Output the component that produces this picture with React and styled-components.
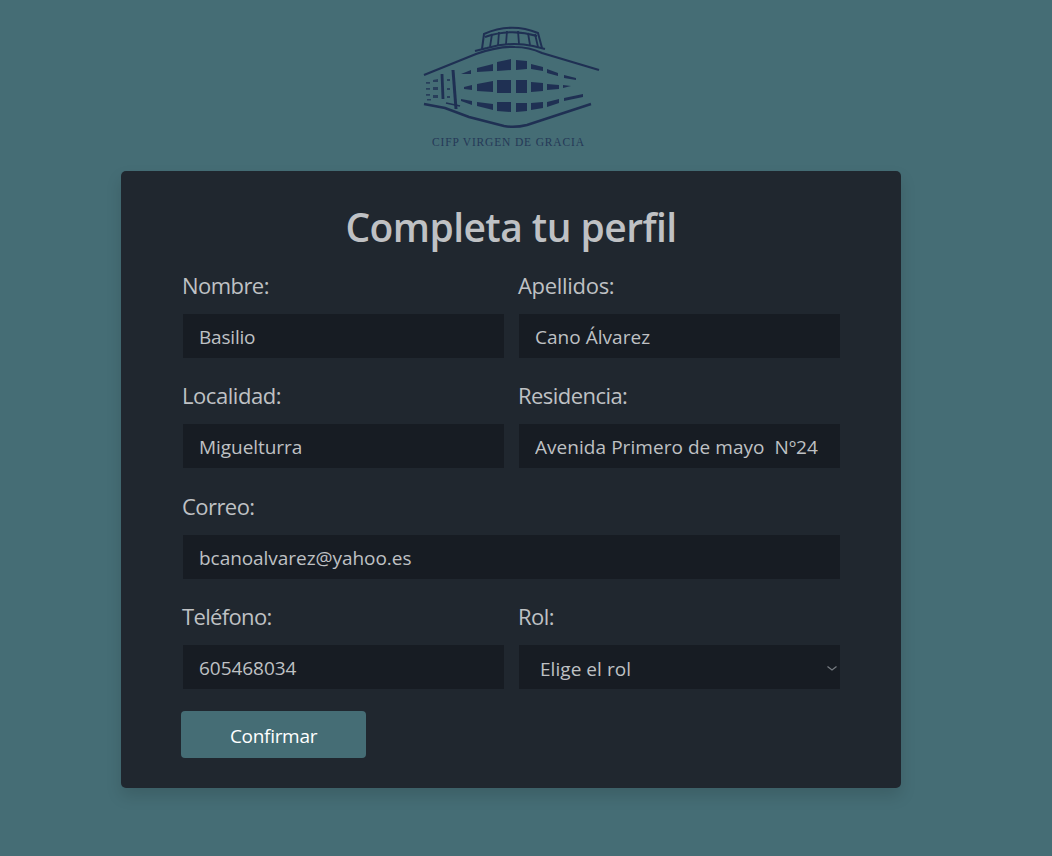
import React from "react";
import styled, { createGlobalStyle } from "styled-components";

const GlobalStyle = createGlobalStyle`
  *, *::before, *::after { box-sizing: border-box; }
  body {
    margin: 0;
    background: #456d75;
    color: #bfc1c4;
    font-family: "Open Sans", "Noto Sans", sans-serif;
  }
`;

const Page = styled.main`
  display: flex;
  flex-direction: column;
  align-items: center;
  width: 1022px;
  min-height: 856px;
  padding-top: 24px;
`;

const Logo = styled.svg`
  display: block;
  width: 184px;
  height: 128px;
  margin-bottom: 19px;
  flex: none;
`;

const Card = styled.form`
  width: 780px;
  height: 617px;
  padding: 29px 60px 30px;
  border-radius: 5px;
  background: #20272f;
  box-shadow: 0 8px 16px rgba(0, 0, 0, 0.13);
`;

const Title = styled.h1`
  margin: 0 0 10px;
  text-align: center;
  font-size: 39px;
  line-height: 54px;
  font-weight: 600;
  letter-spacing: -0.56px;
`;

const Fields = styled.div`
  display: grid;
  grid-template-columns: 1fr 1fr;
  column-gap: 12px;
  grid-auto-rows: 110.4px;
`;

const Field = styled.label`
  display: flex;
  flex-direction: column;
  padding: 0 1px 0 2px;
  grid-column: ${(p) => (p.$wide ? "1 / -1" : "auto")};
`;

const Caption = styled.span`
  margin-left: -1px;
  font-size: 22px;
  line-height: 42px;
  height: 50px;
  white-space: nowrap;
  letter-spacing: ${(p) => p.$tracking ?? -0.55}px;
`;

const Input = styled.input`
  width: 100%;
  height: 44px;
  padding: 2px 16px 0;
  border: 0;
  outline: 0;
  background: #171c23;
  color: inherit;
  font: 400 19px "Open Sans", "Noto Sans", sans-serif;
  letter-spacing: ${(p) => p.$tracking ?? -0.05}px;
`;

const SelectBox = styled.span`
  display: grid;
  align-items: center;

  > * { grid-area: 1 / 1; }
`;

const Select = styled(Input).attrs({ as: "select" })`
  appearance: none;
  padding-top: 3px;
  padding-left: 21px;
`;

const Chevron = styled.svg`
  justify-self: end;
  width: 12px;
  height: 8px;
  margin: 3px 2px 0 0;
  pointer-events: none;
`;

const Button = styled.button`
  display: block;
  width: 185px;
  height: 47px;
  margin-top: 5px;
  padding: 3px 0 0;
  border: 0;
  border-radius: 4px;
  background: #456d75;
  color: #fff;
  font: 400 19px "Open Sans", "Noto Sans", sans-serif;
  letter-spacing: -0.3px;
`;

const ink = "#1f3053";

function SchoolLogo() {
  return (
    <Logo viewBox="420 24 184 128" role="img" aria-label="CIFP Virgen de Gracia">
      <g fill="none" stroke={ink} strokeWidth="2.2">
        <path d="M425 75 L477 54 Q500 46 516 47 Q530 47 543 53 L600 70" />
        <path d="M425 104 L446 108 L470 117 L505 126 Q516 128 528 125 L592 104" strokeWidth="2.5" />
        <path d="M476 51 L488 48 Q512 41 534 46 L546 49" strokeWidth="2" />
        <path d="M483 49 L485 34 Q512 22 539 33 L543 48 M486 37 Q512 28 538 36" strokeWidth="2" />
        <path d="M493 34 L491 47 M500 32 L499 45 M508 31 L507 44 M519 31 L520 44 M529 33 L531 45 M536 34 L539 47" strokeWidth="1.8" />
        <path d="M443 74 L444 99" strokeWidth="2.8" />
        <path d="M454 70 L457 109" strokeWidth="3" />
        <path d="M447 103 L461 106" strokeWidth="1.7" />
      </g>
      <g fill={ink}>
        <path d="M462 74 L472 70 V74 Z M478 68 L494 64 V71 L478 72 Z M498 62 L512 59 V70 L498 71 Z M517 60 L528 61 V69 L517 70 Z M532 64 L544 67 V71 L532 69 Z M548 69 L559 73 V76 L548 73 Z M565 75 L577 78 V80 L565 78 Z" />
        <path d="M465 87 L473 85 V90 L465 89 Z M478 84 L494 81 V92 L478 91 Z M498 80 H512 V93 H498 Z M517 80 H528 V93 H517 Z M532 82 L544 83 V91 L532 92 Z M548 84 L560 85 V89 L548 90 Z M564 85 L572 86 L564 88 Z" />
        <path d="M462 99 L473 101 V105 L462 101 Z M478 102 L494 104 V110 L478 106 Z M498 102 H512 V112 L498 111 Z M517 103 H528 V111 L517 112 Z M532 103 L544 102 V108 L532 110 Z M548 102 L560 99 V103 L548 107 Z M565 98 L584 94 V97 L565 101 Z" />
        <path d="M427 82 h4 v1.8 h-4z M434 80 l5 -1 v3 h-5z M427 88 h4 v1.8 h-4z M434 87 h5 v3 h-5z M427 94 h4 v1.8 h-4z M434 95 h5 v3 h-5z M428 99 h4 v1.5 h-4z M448 79 h3 v2 h-3z M448 88 h3 v2 h-3z M448 96 h3 v2 h-3z" opacity="0.75" />
        <text x="433" y="145.5" fontFamily="Liberation Serif, serif" fontSize="11.5" textLength="152" lengthAdjust="spacing" opacity="0.85">
          CIFP VIRGEN DE GRACIA
        </text>
      </g>
    </Logo>
  );
}

const fields = [
  { label: "Nombre:", value: "Basilio", valueTracking: -0.2 },
  { label: "Apellidos:", value: "Cano Álvarez", labelTracking: -0.3, valueTracking: 0.03 },
  { label: "Localidad:", value: "Miguelturra", labelTracking: -0.45 },
  { label: "Residencia:", value: "Avenida Primero de mayo  Nº24", valueTracking: 0.05 },
  { label: "Correo:", value: "bcanoalvarez@yahoo.es", type: "email", wide: true },
  { label: "Teléfono:", value: "605468034", type: "tel", labelTracking: -0.65 },
];

export default function App() {
  return (
    <>
      <GlobalStyle />
      <Page>
        <SchoolLogo />
        <Card onSubmit={(e) => e.preventDefault()}>
          <Title>Completa tu perfil</Title>
          <Fields>
            {fields.map((f) => (
              <Field key={f.label} $wide={f.wide}>
                <Caption $tracking={f.labelTracking}>{f.label}</Caption>
                <Input type={f.type || "text"} defaultValue={f.value} $tracking={f.valueTracking} />
              </Field>
            ))}
            <Field>
              <Caption>Rol:</Caption>
              <SelectBox>
                <Select defaultValue="" $tracking={0.05}>
                  <option value="">Elige el rol</option>
                </Select>
                <Chevron viewBox="0 0 12 8" fill="none" stroke="#777c82" strokeWidth="1.2">
                  <path d="M1.5 1.5 L6 5 L10.5 1.5" />
                </Chevron>
              </SelectBox>
            </Field>
          </Fields>
          <Button type="submit">Confirmar</Button>
        </Card>
      </Page>
    </>
  );
}
